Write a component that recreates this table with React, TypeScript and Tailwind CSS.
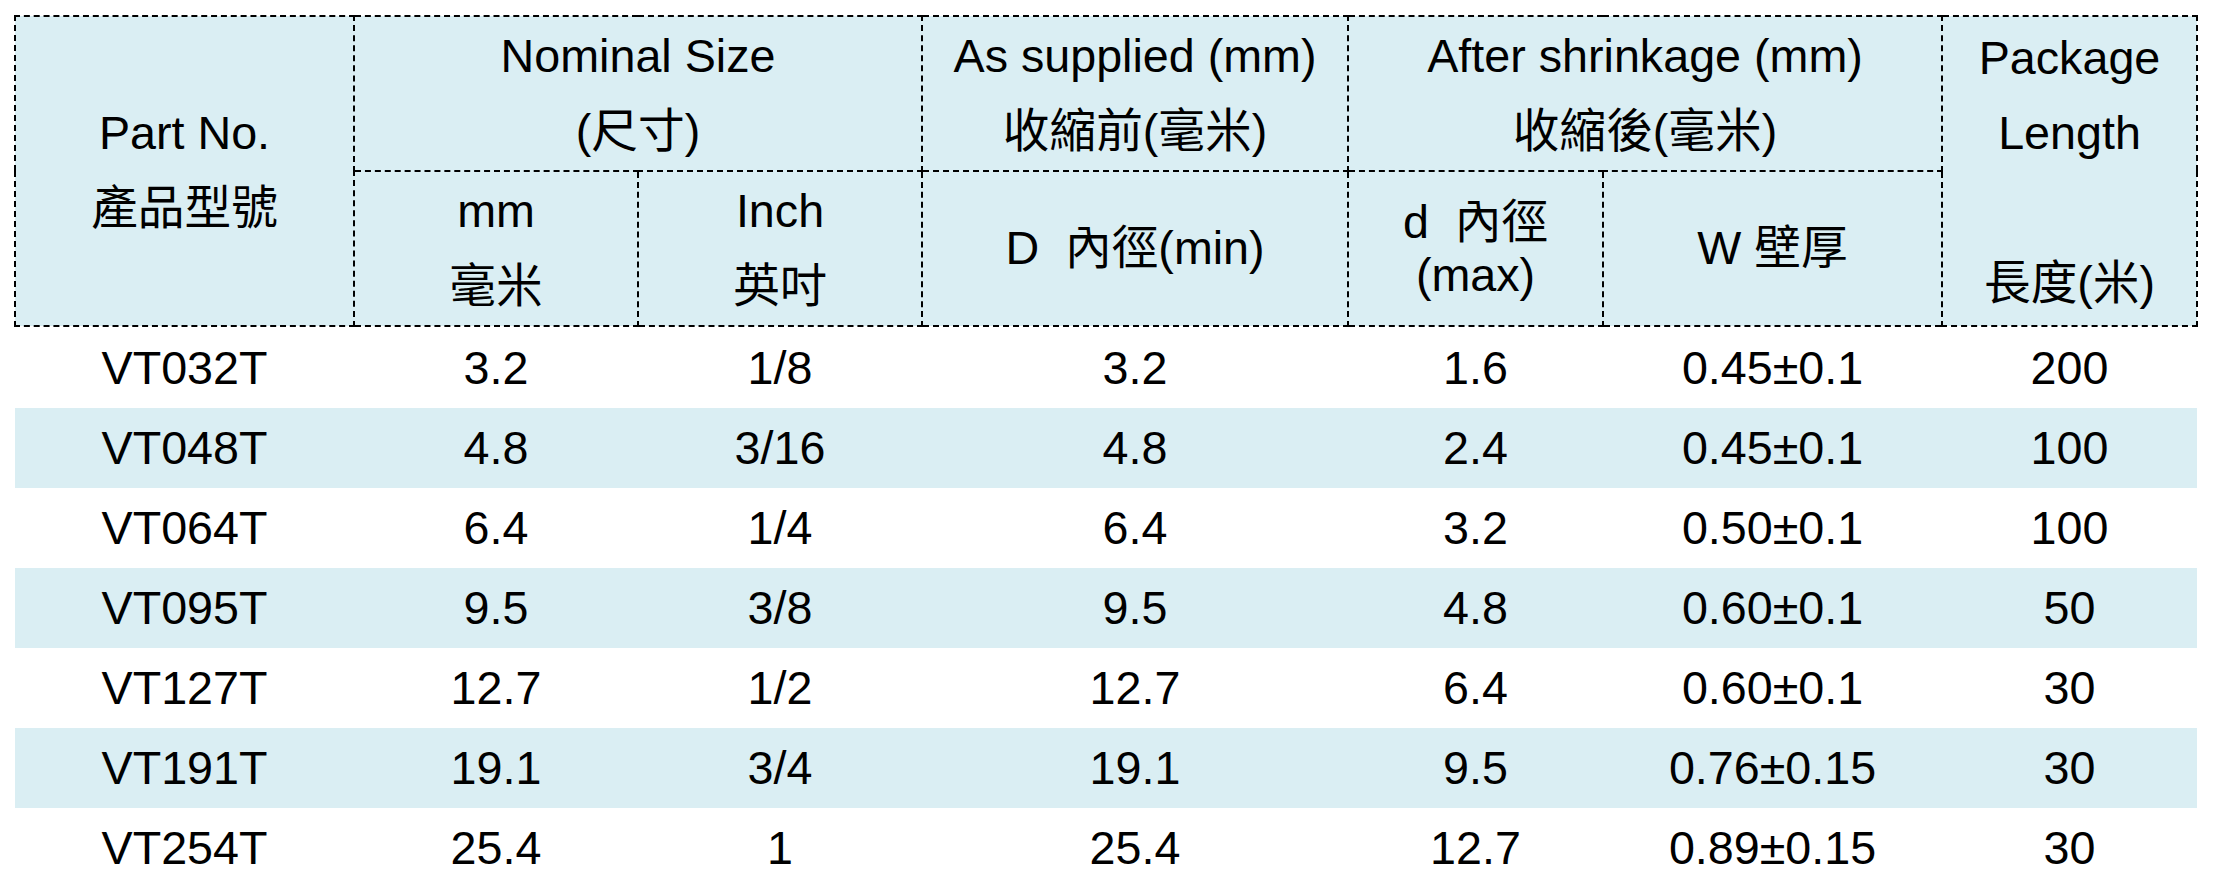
const rows = [
  ["VT032T", "3.2", "1/8", "3.2", "1.6", "0.45±0.1", "200"],
  ["VT048T", "4.8", "3/16", "4.8", "2.4", "0.45±0.1", "100"],
  ["VT064T", "6.4", "1/4", "6.4", "3.2", "0.50±0.1", "100"],
  ["VT095T", "9.5", "3/8", "9.5", "4.8", "0.60±0.1", "50"],
  ["VT127T", "12.7", "1/2", "12.7", "6.4", "0.60±0.1", "30"],
  ["VT191T", "19.1", "3/4", "19.1", "9.5", "0.76±0.15", "30"],
  ["VT254T", "25.4", "1", "25.4", "12.7", "0.89±0.15", "30"],
];

const th =
  "border-2 border-dashed border-black bg-[#daeef3] p-0 text-center align-middle font-normal leading-[75px]";

export default function App() {
  return (
    <div className="min-h-screen bg-white pl-[14px] pt-[15px] font-[family-name:Liberation_Sans,Noto_Sans_CJK_TC,sans-serif] text-[46.67px] font-light text-black">
      <table className="w-[2182px] table-fixed border-collapse">
        <colgroup>
          <col className="w-[339px]" />
          <col className="w-[284px]" />
          <col className="w-[284px]" />
          <col className="w-[426px]" />
          <col className="w-[255px]" />
          <col className="w-[339px]" />
          <col className="w-[255px]" />
        </colgroup>
        <thead>
          <tr className="h-[155px]">
            <th rowSpan={2} className={th}>
              Part No.
              <br />
              產品型號
            </th>
            <th colSpan={2} className={th}>
              Nominal Size
              <br />
              (尺寸)
            </th>
            <th className={th}>
              As supplied (mm)
              <br />
              收縮前(毫米)
            </th>
            <th colSpan={2} className={th}>
              After shrinkage (mm)
              <br />
              收縮後(毫米)
            </th>
            <th rowSpan={2} className={th}>
              Package
              <br />
              Length
              <br />
              <br />
              長度(米)
            </th>
          </tr>
          <tr className="h-[155px]">
            <th className={th}>
              mm
              <br />
              毫米
            </th>
            <th className={th}>
              Inch
              <br />
              英吋
            </th>
            <th className={th}>D&nbsp; 內徑(min)</th>
            <th className={`${th} !leading-[53px]`}>
              d&nbsp; 內徑
              <br />
              (max)
            </th>
            <th className={th}>W 壁厚</th>
          </tr>
        </thead>
        <tbody>
          {rows.map((r, i) => (
            <tr key={r[0]} className={i % 2 === 1 ? "bg-[#daeef3]" : "bg-white"}>
              {r.map((c, j) => (
                <td
                  key={j}
                  className={`${i === 0 ? "h-[82px]" : "h-[80px]"} p-0 text-center align-middle`}
                >
                  {c}
                </td>
              ))}
            </tr>
          ))}
        </tbody>
      </table>
    </div>
  );
}
